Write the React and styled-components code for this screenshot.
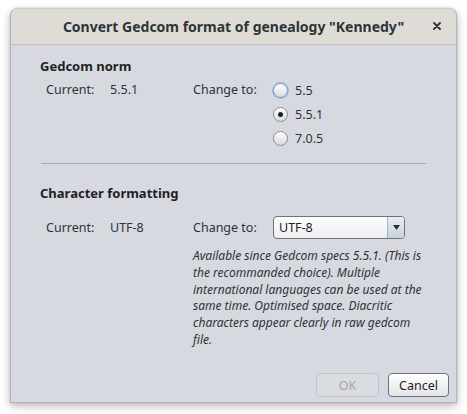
import React, { useState } from 'react'
import styled, { createGlobalStyle } from 'styled-components'

const GlobalStyle = createGlobalStyle`
  html, body {
    margin: 0;
    padding: 0;
    background: #ffffff;
  }
  body {
    font-family: "Noto Sans", "Open Sans", sans-serif;
    color: #2e3436;
  }
`

const Page = styled.div`
  width: 467px;
  height: 414px;
  padding: 8px 10px 0 10px;
  box-sizing: border-box;
  overflow: hidden;
`

const Window = styled.div`
  width: 447px;
  height: 395px;
  display: flex;
  flex-direction: column;
  background: #d6d9df;
  border-radius: 8px 8px 0 0;
  border: 1px solid #b3b5b9;
  border-top-color: #cfccc8;
  box-sizing: border-box;
  box-shadow: 0 3px 9px rgba(0, 0, 0, 0.28), 0 0 2px rgba(0, 0, 0, 0.15);
  overflow: hidden;
`

const TitleBar = styled.div`
  height: 36px;
  flex: none;
  display: flex;
  align-items: center;
  justify-content: center;
  position: relative;
  background: #dfdcd8;
  border-bottom: 1px solid #c2bfba;
  box-sizing: border-box;
`

const Title = styled.div`
  font-size: 14px;
  font-weight: 700;
  color: #2e3436;
`

const CloseButton = styled.button`
  position: absolute;
  right: 12px;
  top: 10px;
  width: 14px;
  height: 14px;
  padding: 0;
  border: none;
  background: transparent;
  display: flex;
  align-items: center;
  justify-content: center;
`

const Body = styled.div`
  flex: 1;
  display: flex;
  flex-direction: column;
`

const Content = styled.div`
  display: flex;
  flex-direction: column;
  padding: 8px 29px 0 29px;
`

const SectionTitle = styled.div`
  font-size: 13px;
  font-weight: 700;
  line-height: 26px;
  color: #1f2224;
  margin-top: ${p => p.$top || 0}px;
`

const FormGrid = styled.div`
  display: grid;
  grid-template-columns: 64px 83px 80px 1fr;
  padding-left: 6px;
  font-size: 12.5px;
  color: #2e3436;
  margin-top: ${p => p.$top || 0}px;
`

const Cell = styled.div`
  line-height: ${p => p.$lh || 20}px;
`

const RadioList = styled.div`
  display: flex;
  flex-direction: column;
  gap: 4px;
`

const RadioRow = styled.label`
  display: flex;
  align-items: center;
  gap: 7px;
  height: 20px;
  cursor: pointer;
`

const RadioCircle = styled.span`
  width: 13px;
  height: 13px;
  border-radius: 50%;
  border: 1px solid ${p => (p.$focus ? '#6f97c8' : '#8b8f95')};
  background: linear-gradient(#ffffff, #d9dbde);
  box-shadow: ${p => (p.$focus ? '0 0 0 1px #9dbde3' : 'none')};
  display: flex;
  align-items: center;
  justify-content: center;
  flex: none;
  &::after {
    content: '';
    width: 5px;
    height: 5px;
    border-radius: 50%;
    background: #1e2022;
    display: ${p => (p.$checked ? 'block' : 'none')};
  }
`

const Separator = styled.div`
  height: 1px;
  background: #a8abb0;
  margin: 15px 1px 0 1px;
`

const Combo = styled.div`
  width: 132px;
  height: 23px;
  box-sizing: border-box;
  border: 1px solid #6e7276;
  border-radius: 4px;
  background: linear-gradient(#ffffff, #eceef0);
  display: flex;
  align-items: center;
  justify-content: space-between;
  overflow: hidden;
`

const ComboText = styled.span`
  padding-left: 5px;
  font-size: 12.5px;
  color: #1f2224;
`

const ComboArrow = styled.span`
  width: 16px;
  height: 100%;
  border-left: 1px solid #a7b2c0;
  background: linear-gradient(#e8edf3, #c8d2de);
  display: flex;
  align-items: center;
  justify-content: center;
`

const Note = styled.div`
  grid-column: 3 / 5;
  font-style: italic;
  font-size: 12px;
  line-height: 16.8px;
  color: #2e3436;
  margin-top: 9px;
  width: 238px;
`

const Footer = styled.div`
  margin-top: auto;
  display: flex;
  justify-content: flex-end;
  gap: 9px;
  padding: 0 7px 5px 0;
`

const Button = styled.button`
  height: 24px;
  width: ${p => p.$w}px;
  border-radius: 4px;
  font-family: "Noto Sans", "Open Sans", sans-serif;
  font-size: 12.5px;
  padding: 0;
  border: 1px solid ${p => (p.disabled ? '#c3c6cb' : '#6e7276')};
  color: ${p => (p.disabled ? '#a4a7ab' : '#1f2224')};
  background: ${p =>
    p.disabled ? '#d9dce1' : 'linear-gradient(#ffffff, #e3e5e8)'};
`

export default function App() {
  const [norm, setNorm] = useState('5.5.1')
  const norms = ['5.5', '5.5.1', '7.0.5']

  return (
    <Page>
      <GlobalStyle />
      <Window>
        <TitleBar>
          <Title>Convert Gedcom format of genealogy "Kennedy"</Title>
          <CloseButton aria-label="Close">
            <svg width="8" height="8" viewBox="0 0 8 8">
              <path d="M1 1 L7 7 M7 1 L1 7" stroke="#2e3436" strokeWidth="1.8" strokeLinecap="round" />
            </svg>
          </CloseButton>
        </TitleBar>
        <Body>
          <Content>
            <SectionTitle>Gedcom norm</SectionTitle>
            <FormGrid $top={1}>
              <Cell>Current:</Cell>
              <Cell>5.5.1</Cell>
              <Cell>Change to:</Cell>
              <RadioList>
                {norms.map((n, i) => (
                  <RadioRow key={n} onClick={() => setNorm(n)}>
                    <RadioCircle $checked={norm === n} $focus={i === 0} />
                    {n}
                  </RadioRow>
                ))}
              </RadioList>
            </FormGrid>
            <Separator />
            <SectionTitle $top={16}>Character formatting</SectionTitle>
            <FormGrid $top={10}>
              <Cell $lh={23}>Current:</Cell>
              <Cell $lh={23}>UTF-8</Cell>
              <Cell $lh={23}>Change to:</Cell>
              <Combo>
                <ComboText>UTF-8</ComboText>
                <ComboArrow>
                  <svg width="7" height="5" viewBox="0 0 7 5">
                    <path d="M0 0 L7 0 L3.5 5 Z" fill="#2b2f33" />
                  </svg>
                </ComboArrow>
              </Combo>
              <Note>
                Available since Gedcom specs 5.5.1. (This is the recommanded choice). Multiple
                international languages can be used at the same time. Optimised space. Diacritic
                characters appear clearly in raw gedcom file.
              </Note>
            </FormGrid>
          </Content>
          <Footer>
            <Button disabled $w={63}>OK</Button>
            <Button $w={61}>Cancel</Button>
          </Footer>
        </Body>
      </Window>
    </Page>
  )
}
